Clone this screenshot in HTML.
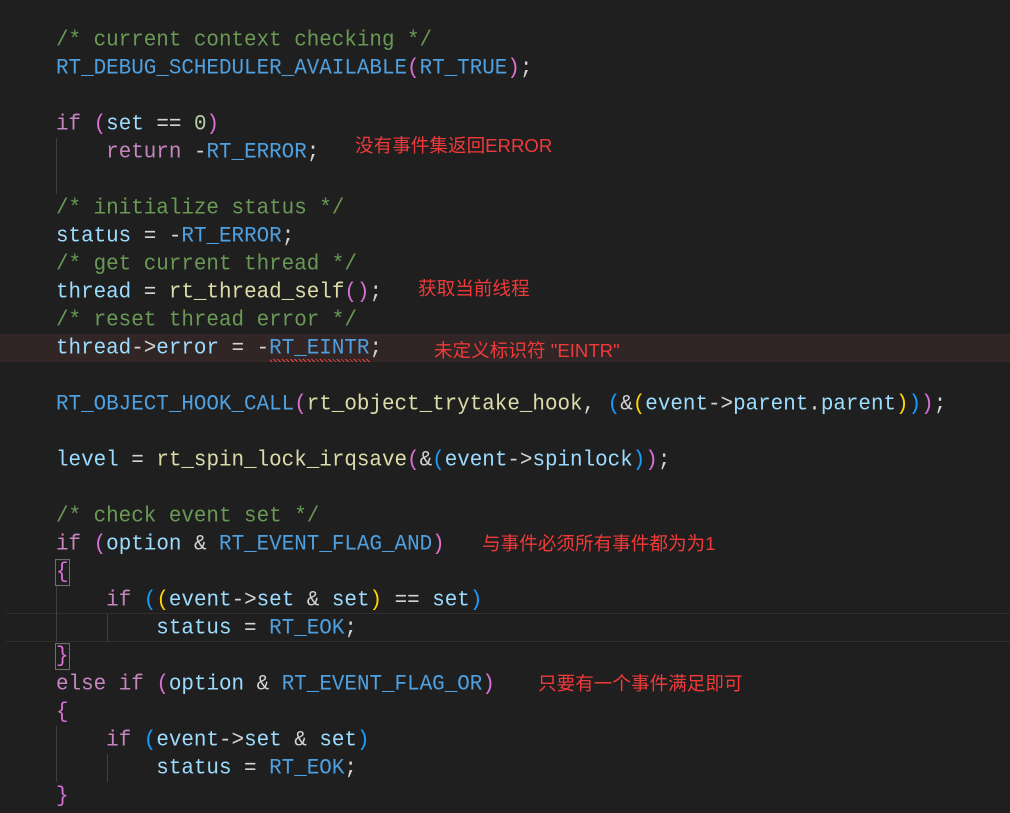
<!DOCTYPE html>
<html><head><meta charset="utf-8"><style>
body{margin:0;width:1010px;height:808px;background:#1f1f1f;overflow:hidden;position:relative}
.l{position:absolute;left:56px;height:28px;line-height:30px;font-family:"Liberation Mono",monospace;font-size:20.9px;color:#9cdcfe;white-space:pre;transform:scaleY(1.08);transform-origin:0 50%}
.c{color:#6a9955}.k{color:#c586c0}.m{color:#4fa0e0}.f{color:#dcdcaa}.n{color:#b5cea8}.o{color:#d4d4d4}
.p{color:#da70d6}.b{color:#179fff}.g{color:#ffd700}
.a{position:absolute;color:#f03a3a;font-family:"Liberation Sans","Noto Sans CJK SC",sans-serif;font-size:18.6px;white-space:pre}
.ig{position:absolute;width:1px;background:#404040}
.err{position:absolute;left:0;top:334px;width:1010px;height:28px;background:#322525}
.cur{position:absolute;left:6px;top:613px;width:1004px;height:27px;border-top:1px solid #2e2e2e;border-bottom:1px solid #2e2e2e}
.sq{position:absolute;left:270px;top:359px;width:100px;height:3px;background:repeating-linear-gradient(45deg,transparent 0 1px,#e44 1px 2px,transparent 2px 3px)}
.bx{outline:1px solid #707070}
</style></head><body>
<div class="err"></div>
<div class="cur"></div>
<div class="ig" style="left:56px;top:138px;height:56px"></div>
<div class="ig" style="left:56px;top:586px;height:56px"></div>
<div class="ig" style="left:56px;top:726px;height:56px"></div>
<div class="ig" style="left:107px;top:614px;height:28px"></div>
<div class="ig" style="left:107px;top:754px;height:28px"></div>
<div class="l c" style="top:26px">/* current context checking */</div>
<div class="l" style="top:54px"><span class="m">RT_DEBUG_SCHEDULER_AVAILABLE</span><span class="p">(</span><span class="m">RT_TRUE</span><span class="p">)</span><span class="o">;</span></div>
<div class="l" style="top:110px"><span class="k">if</span> <span class="p">(</span>set <span class="o">==</span> <span class="n">0</span><span class="p">)</span></div>
<div class="l" style="top:138px">    <span class="k">return</span> <span class="o">-</span><span class="m">RT_ERROR</span><span class="o">;</span></div>
<div class="l c" style="top:194px">/* initialize status */</div>
<div class="l" style="top:222px">status <span class="o">=</span> <span class="o">-</span><span class="m">RT_ERROR</span><span class="o">;</span></div>
<div class="l c" style="top:250px">/* get current thread */</div>
<div class="l" style="top:278px">thread <span class="o">=</span> <span class="f">rt_thread_self</span><span class="p">()</span><span class="o">;</span></div>
<div class="l c" style="top:306px">/* reset thread error */</div>
<div class="l" style="top:334px">thread<span class="o">-&gt;</span>error <span class="o">=</span> <span class="o">-</span><span class="m">RT_EINTR</span><span class="o">;</span></div>
<div class="sq"></div>
<div class="l" style="top:390px"><span class="m">RT_OBJECT_HOOK_CALL</span><span class="p">(</span><span class="f">rt_object_trytake_hook</span><span class="o">,</span> <span class="b">(</span><span class="o">&amp;</span><span class="g">(</span>event<span class="o">-&gt;</span>parent<span class="o">.</span>parent<span class="g">)</span><span class="b">)</span><span class="p">)</span><span class="o">;</span></div>
<div class="l" style="top:446px">level <span class="o">=</span> <span class="f">rt_spin_lock_irqsave</span><span class="p">(</span><span class="o">&amp;</span><span class="b">(</span>event<span class="o">-&gt;</span>spinlock<span class="b">)</span><span class="p">)</span><span class="o">;</span></div>
<div class="l c" style="top:502px">/* check event set */</div>
<div class="l" style="top:530px"><span class="k">if</span> <span class="p">(</span>option <span class="o">&amp;</span> <span class="m">RT_EVENT_FLAG_AND</span><span class="p">)</span></div>
<div class="l" style="top:558px"><span class="p bx">{</span></div>
<div class="l" style="top:586px">    <span class="k">if</span> <span class="b">(</span><span class="g">(</span>event<span class="o">-&gt;</span>set <span class="o">&amp;</span> set<span class="g">)</span> <span class="o">==</span> set<span class="b">)</span></div>
<div class="l" style="top:614px">        status <span class="o">=</span> <span class="m">RT_EOK</span><span class="o">;</span></div>
<div class="l" style="top:642px"><span class="p bx">}</span></div>
<div class="l" style="top:670px"><span class="k">else</span> <span class="k">if</span> <span class="p">(</span>option <span class="o">&amp;</span> <span class="m">RT_EVENT_FLAG_OR</span><span class="p">)</span></div>
<div class="l" style="top:698px"><span class="p">{</span></div>
<div class="l" style="top:726px">    <span class="k">if</span> <span class="b">(</span>event<span class="o">-&gt;</span>set <span class="o">&amp;</span> set<span class="b">)</span></div>
<div class="l" style="top:754px">        status <span class="o">=</span> <span class="m">RT_EOK</span><span class="o">;</span></div>
<div class="l" style="top:782px"><span class="p">}</span></div>
<div class="a" style="left:355px;top:131px">没有事件集返回ERROR</div>
<div class="a" style="left:418px;top:274px">获取当前线程</div>
<div class="a" style="left:434px;top:336px">未定义标识符 "EINTR"</div>
<div class="a" style="left:482px;top:529px">与事件必须所有事件都为为1</div>
<div class="a" style="left:538px;top:669px">只要有一个事件满足即可</div>
</body></html>
